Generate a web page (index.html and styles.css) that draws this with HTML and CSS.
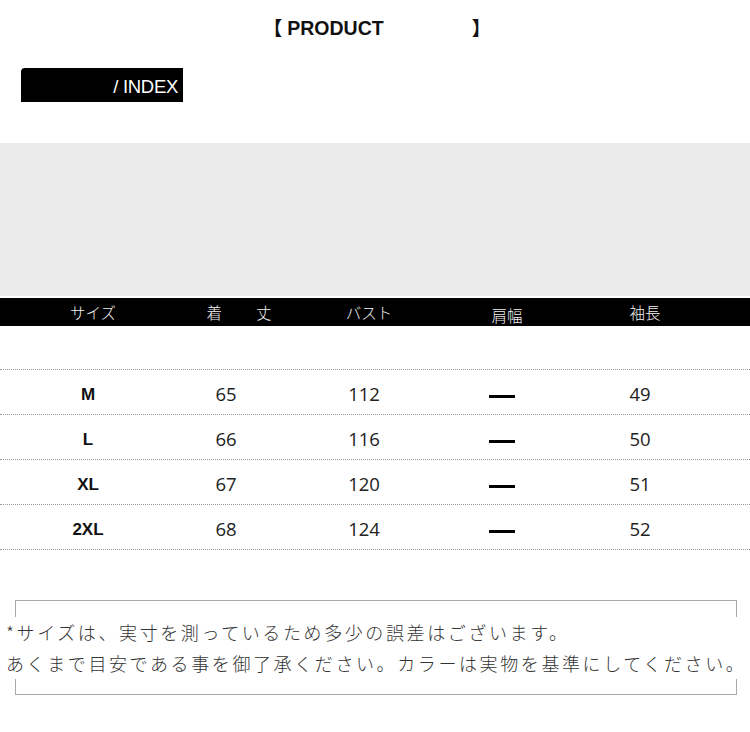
FILE: index.html
```html
<!DOCTYPE html>
<html lang="ja">
<head>
<meta charset="utf-8">
<link rel="stylesheet" href="styles.css">
</head>
<body>
<div class="title">
  <span class="br">【</span><span class="prod">PRODUCT</span><span class="br br-r">】</span>
</div>
<div class="index-row"><div class="index-box">/ INDEX</div></div>
<div class="grey"></div>
<div class="head">
  <div>サイズ</div>
  <div class="wide"><span>着</span><span>丈</span></div>
  <div>バスト</div>
  <div class="low">肩幅</div>
  <div>袖長</div>
</div>
<div class="tbody">
  <div class="row"><div class="sz">M</div><div>65</div><div>112</div><div><span class="dash"></span></div><div>49</div></div>
  <div class="row"><div class="sz">L</div><div>66</div><div>116</div><div><span class="dash"></span></div><div>50</div></div>
  <div class="row"><div class="sz">XL</div><div>67</div><div>120</div><div><span class="dash"></span></div><div>51</div></div>
  <div class="row last"><div class="sz">2XL</div><div>68</div><div>124</div><div><span class="dash"></span></div><div>52</div></div>
</div>
<div class="note">
  <div class="note-text">
    <p>*サイズは、実寸を測っているため多少の誤差はございます。</p>
    <p>あくまで目安である事を御了承ください。カラーは実物を基準にしてください。</p>
  </div>
</div>
</body>
</html>
```
FILE: styles.css
```css
html, body {
  margin: 0;
  padding: 0;
  background: #fff;
  width: 750px;
  height: 732px;
  overflow: hidden;
}
body {
  font-family: "Liberation Sans", "Noto Sans CJK JP", sans-serif;
  color: #111;
}
.title {
  display: flex;
  justify-content: center;
  align-items: center;
  padding-top: 16px;
  height: 24px;
  font-weight: bold;
  font-size: 19.5px;
  line-height: 24px;
  padding-left: 4px;
}
.br {
  font-family: "Noto Sans CJK JP", sans-serif;
  font-size: 19px;
  width: 19px;
  margin-right: 5px;
}
.br-r {
  margin-right: 0;
  margin-left: 88px;
}
.index-row {
  padding-top: 28px;
  padding-left: 21px;
}
.index-box {
  width: 162px;
  height: 34px;
  background: #000;
  color: #fff;
  box-sizing: border-box;
  text-align: right;
  padding-right: 5px;
  font-size: 18.5px;
  line-height: 37px;
  border-top-left-radius: 4px;
  letter-spacing: -0.3px;
}
.grey {
  margin-top: 41px;
  height: 153px;
  background: #ebebeb;
}
.head {
  margin-top: 2px;
  height: 28px;
  background: #000;
  color: #f2f2f2;
  display: grid;
  grid-template-columns: repeat(5, 138px);
  padding-left: 24px;
  font-family: "Noto Sans CJK JP", sans-serif;
  font-weight: 300;
  font-size: 15.5px;
  line-height: 28px;
  text-align: center;
}
.head .wide {
  display: flex;
  justify-content: center;
  gap: 34px;
  padding-left: 16px;
}
.head .low {
  padding-top: 3px;
}
.tbody {
  margin-top: 43px;
}
.row {
  height: 45px;
  box-sizing: border-box;
  border-top: 1px dotted #9a9a9a;
  display: grid;
  grid-template-columns: repeat(5, 138px);
  padding-left: 19px;
  align-items: center;
  text-align: center;
  font-family: "Open Sans", "Liberation Sans", sans-serif;
  font-weight: 400;
  font-size: 18.5px;
  color: #222;
  padding-top: 3px;
}
.row.last {
  border-bottom: 1px dotted #9a9a9a;
  height: 46px;
}
.row .sz {
  font-family: "Liberation Sans", sans-serif;
  font-weight: bold;
  font-size: 17px;
  color: #111;
  padding-top: 2px;
}
.dash {
  display: inline-block;
  width: 26px;
  height: 3px;
  background: #000;
  vertical-align: middle;
}
.note {
  margin: 50px 13px 0 15px;
  height: 95px;
  box-sizing: border-box;
  border: 1px solid #a8a8a8;
  padding-top: 16px;
}
.note-text {
  margin: 0 -10px 0 -10px;
  background: #fff;
  padding-left: 0;
  font-family: "Noto Sans CJK JP", sans-serif;
  font-weight: 300;
  font-size: 18px;
  letter-spacing: 2.6px;
  line-height: 31px;
  color: #333;
  white-space: nowrap;
}
.note-text p {
  margin: 0;
}
```
